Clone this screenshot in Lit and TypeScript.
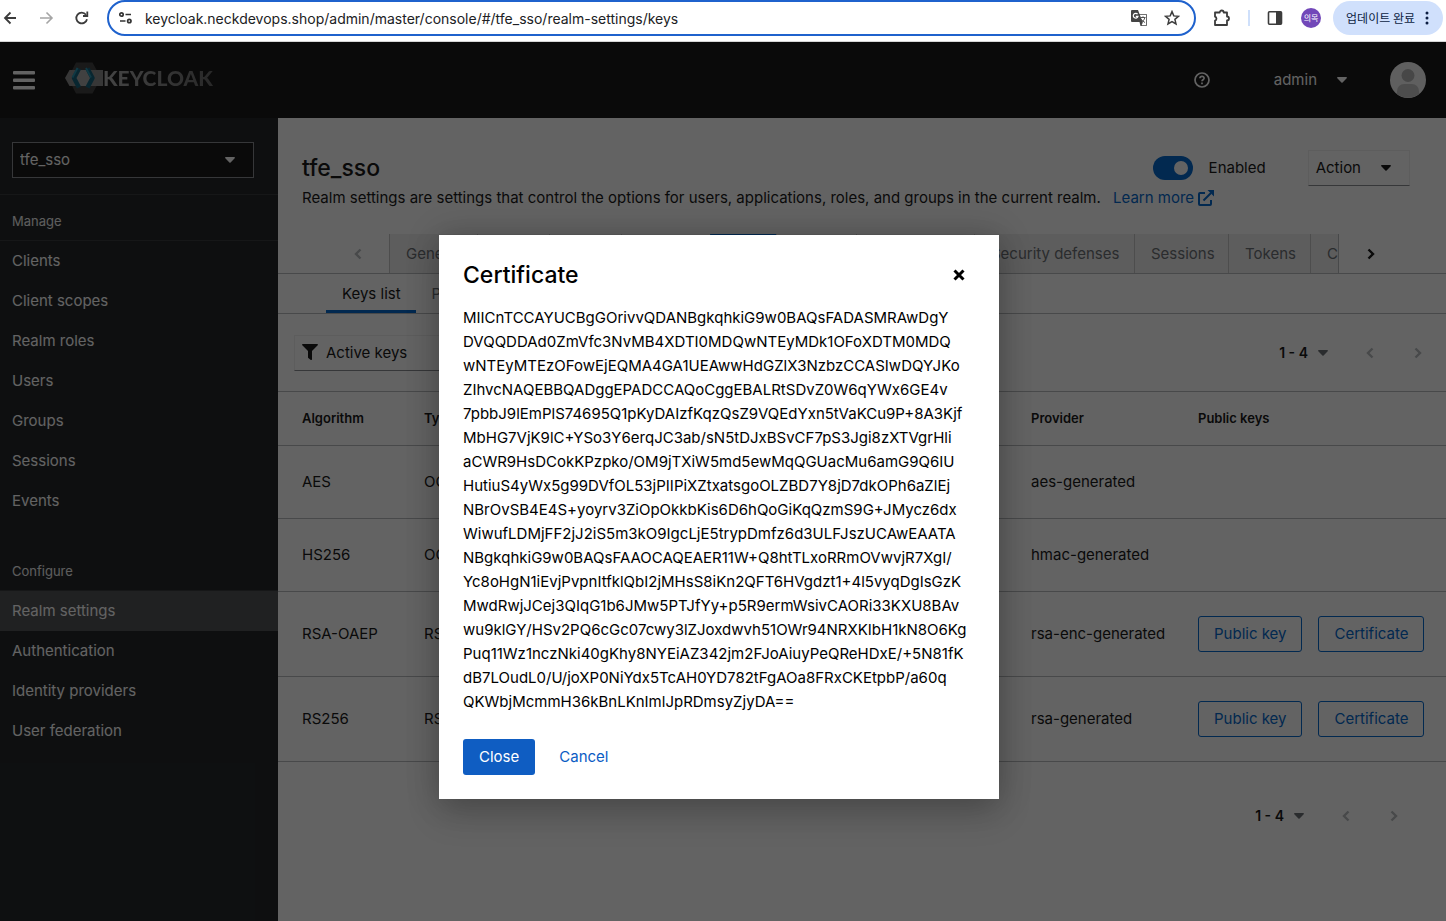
import { LitElement, html, css, svg } from "lit";
import { customElement } from "lit/decorators.js";
import { classMap } from "lit/directives/class-map.js";

const manageItems = ["Clients", "Client scopes", "Realm roles", "Users", "Groups", "Sessions", "Events"];
const configureItems = ["Realm settings", "Authentication", "Identity providers", "User federation"];
const tabs = ["General", "Login", "Email", "Themes", "Keys", "Events", "Localization", "Security defenses", "Sessions", "Tokens", "Client policies"];

const keys = [
  { algorithm: "AES", type: "OCT", provider: "aes-generated", pub: false },
  { algorithm: "HS256", type: "OCT", provider: "hmac-generated", pub: false },
  { algorithm: "RSA-OAEP", type: "RSA", provider: "rsa-enc-generated", pub: true },
  { algorithm: "RS256", type: "RSA", provider: "rsa-generated", pub: true },
];

const certificate = [
  "MIICnTCCAYUCBgGOrivvQDANBgkqhkiG9w0BAQsFADASMRAwDgY",
  "DVQQDDAd0ZmVfc3NvMB4XDTI0MDQwNTEyMDk1OFoXDTM0MDQ",
  "wNTEyMTEzOFowEjEQMA4GA1UEAwwHdGZlX3NzbzCCASIwDQYJKo",
  "ZIhvcNAQEBBQADggEPADCCAQoCggEBALRtSDvZ0W6qYWx6GE4v",
  "7pbbJ9lEmPlS74695Q1pKyDAIzfKqzQsZ9VQEdYxn5tVaKCu9P+8A3Kjf",
  "MbHG7VjK9lC+YSo3Y6erqJC3ab/sN5tDJxBSvCF7pS3Jgi8zXTVgrHli",
  "aCWR9HsDCokKPzpko/OM9jTXiW5md5ewMqQGUacMu6amG9Q6IU",
  "HutiuS4yWx5g99DVfOL53jPIIPiXZtxatsgoOLZBD7Y8jD7dkOPh6aZlEj",
  "NBrOvSB4E4S+yoyrv3ZiOpOkkbKis6D6hQoGiKqQzmS9G+JMycz6dx",
  "WiwufLDMjFF2jJ2iS5m3kO9IgcLjE5trypDmfz6d3ULFJszUCAwEAATA",
  "NBgkqhkiG9w0BAQsFAAOCAQEAER11W+Q8htTLxoRRmOVwvjR7XgI/",
  "Yc8oHgN1iEvjPvpnItfklQbI2jMHsS8iKn2QFT6HVgdzt1+4l5vyqDgIsGzK",
  "MwdRwjJCej3QIqG1b6JMw5PTJfYy+p5R9ermWsivCAORi33KXU8BAv",
  "wu9klGY/HSv2PQ6cGc07cwy3lZJoxdwvh51OWr94NRXKIbH1kN8O6Kg",
  "Puq11Wz1nczNki40gKhy8NYEiAZ342jm2FJoAiuyPeQReHDxE/+5N81fK",
  "dB7LOudL0/U/joXP0NiYdx5TcAH0YD782tFgAOa8FRxCKEtpbP/a60q",
  "QKWbjMcmmH36kBnLKnImlJpRDmsyZjyDA==",
];

const caret = svg`<svg class="caret" width="10" height="6" viewBox="0 0 10 6" aria-hidden="true"><path d="M.8 0h8.4c.7 0 1 .8.5 1.3L5.6 5.6a.9.9 0 0 1-1.2 0L.3 1.3C-.2.8.1 0 .8 0z" fill="currentColor"/></svg>`;
const chevron = (left: boolean) => html`<svg width="10" height="12" viewBox="0 0 10 12" aria-hidden="true">
  <path d=${left ? "M7.5 1.5 3 6l4.5 4.5" : "M2.5 1.5 7 6l-4.5 4.5"} fill="none" stroke="currentColor" stroke-width="2.4"/></svg>`;

const base = css`
  :host, * { box-sizing: border-box; }
  button, input, select { font: inherit; color: inherit; background: none; border: 0; margin: 0; padding: 0; }
  button, select { cursor: pointer; }
  svg { display: block; flex: none; }
`;

@customElement("browser-bar")
class BrowserBar extends LitElement {
  static styles = [base, css`
    :host { display: flex; align-items: center; height: 42px; padding: 0 3px 5px 2px; background: #fff; border-bottom: 1px solid #d5d5d5; color: #3c3c3c; font: 14px/20px Inter, sans-serif; }
    .nav { display: flex; gap: 20px; margin-right: 17px; }
    .off { color: #a5a5a5; }
    .address { flex: 1; display: flex; align-items: center; gap: 8px; height: 36px; border: 2px solid #1f62cd; border-radius: 18px; padding: 0 14px 0 8px; }
    .url { flex: 1; min-width: 0; height: 24px; color: #202124; outline: 0; }
    .star { margin-left: 8px; }
    .tools { display: flex; align-items: center; margin-left: 16px; }
    .rule { width: 2px; height: 16px; background: #cfe0fb; margin: 0 17px 0 16px; }
    .me { display: grid; place-items: center; width: 20px; height: 20px; margin: 0 12px 0 18px; border-radius: 50%; background: #7248b9; color: #fff; font: 8px/20px "Noto Sans CJK KR", sans-serif; }
    .update { display: flex; align-items: center; gap: 10px; height: 34px; padding: 0 14px 0 13px; border-radius: 17px; background: #d0e0fc; color: #0c1d42; font: 12px/20px "Noto Sans CJK KR", sans-serif; white-space: nowrap; }
  `];
  render() {
    return html`
      <div class="nav">
        <button aria-label="Back"><svg width="16" height="16" viewBox="0 0 16 16" fill="none" stroke="currentColor" stroke-width="1.8"><path d="M14 8H3.5M8.500 2.500 3 8l5.500 5.500"/></svg></button>
        <button class="off" aria-label="Forward"><svg width="16" height="16" viewBox="0 0 16 16" fill="none" stroke="currentColor" stroke-width="1.600"><path d="M2 8h11.500M8.500 2.500 14 8l-5.500 5.500"/></svg></button>
        <button aria-label="Reload"><svg width="16" height="16" viewBox="0 0 16 16" fill="none" stroke="currentColor" stroke-width="1.800"><path d="M13 9.200A5.400 5.400 0 1 1 12 4.700"/><path d="M13.300 1.500V6H9" /></svg></button>
      </div>
      <div class="address">
        <svg width="20" height="16" viewBox="0 0 20 16" fill="none" stroke="#333" stroke-width="1.700"><circle cx="4.500" cy="4.500" r="1.700"/><path d="M8.500 4.500h5.500M3 11h5.500"/><circle cx="12.300" cy="11" r="1.700"/></svg>
        <input class="url" aria-label="Address" value="keycloak.neckdevops.shop/admin/master/console/#/tfe_sso/realm-settings/keys" />
        <button aria-label="Translate"><svg width="18" height="18" viewBox="0 0 18 18"><path d="M2 1h6l1.500 4H16a1 1 0 0 1 1 1v10a1 1 0 0 1-1 1h-5.500L9.500 13H2a1 1 0 0 1-1-1V2a1 1 0 0 1 1-1z" fill="#444"/><path d="M9.800 5.800h6.400v10.400h-4.600l1.200-2.600z" fill="#fff"/><path d="M7.600 5.200A2.400 2.400 0 1 0 8 7.400H5.800" fill="none" stroke="#fff" stroke-width="1.200"/><path d="M10.500 8.500h5M13 7.300v1.200M11 10c1 1.500 2.200 2.800 4 3.500M14.800 8.700c-.4 2-1.800 3.500-3 4.300" fill="none" stroke="#555"/></svg></button>
        <button class="star" aria-label="Bookmark"><svg width="16" height="16" viewBox="0 0 16 16" fill="none" stroke="currentColor" stroke-width="1.500"><path d="m8 1.600 1.800 4.300 4.700.4-3.600 3 1.100 4.600L8 11.500l-4 2.400 1.100-4.600-3.600-3 4.700-.4z"/></svg></button>
      </div>
      <div class="tools">
        <button aria-label="Extensions"><svg width="20" height="18" viewBox="0 0 20 18" fill="none" stroke="currentColor" stroke-width="1.800" stroke-linejoin="round"><path d="M3 3.500h4.700a2 2 0 0 1 4 0H15v4a2 2 0 0 1 0 4v4.500H3v-4.300a2.100 2.100 0 0 0 0-4z"/></svg></button>
        <span class="rule"></span>
        <button aria-label="Side panel"><svg width="16" height="16" viewBox="0 0 16 16"><rect x="1.500" y="1.800" width="13" height="12.400" rx="1" fill="none" stroke="#3c3c3c" stroke-width="1.600"/><path d="M9 1.800h5.500v12.400H9z" fill="#3c3c3c"/></svg></button>
        <span class="me">의목</span>
        <button class="update">업데이트 완료 <svg width="4" height="14" viewBox="0 0 4 14" fill="#0c1d42"><circle cx="2" cy="2" r="1.500"/><circle cx="2" cy="7" r="1.500"/><circle cx="2" cy="12" r="1.500"/></svg></button>
      </div>`;
  }
}

@customElement("console-header")
class ConsoleHeader extends LitElement {
  static styles = [base, css`
    :host { display: flex; align-items: center; height: 76px; padding: 0 20px 0 13px; background: #151515; color: #fff; }
    .menu { margin-right: 30px; }
    .brand { display: flex; align-items: center; flex: 1; height: 34px; margin-bottom: 4px; }
    .word { font: 900 21px/34px Lato, sans-serif; background: linear-gradient(90deg, #b0b0b0, #666); -webkit-background-clip: text; background-clip: text; color: transparent; }
    .user { display: flex; align-items: center; gap: 20px; margin: 0 43px 0 64px; }
  `];
  render() {
    return html`
      <button class="menu" aria-label="Global navigation"><svg width="22" height="20" viewBox="0 0 22 20" fill="#fff"><rect y="1" width="22" height="3.500" rx="1"/><rect y="8.500" width="22" height="3.500" rx="1"/><rect y="16" width="22" height="3.500" rx="1"/></svg></button>
      <div class="brand">
        <svg width="38" height="34" viewBox="0 0 38 34"><path d="M11 1.500h16.500L36 17l-8.500 15.500H11L3 17z" fill="#404040"/><path d="M4.500 9H38v16H4.500L0 17z" fill="#8c8c8c"/><path d="M14 9h9l4.500 8-4.500 8h-9l-4-8z" fill="#a6a6a6"/><path d="m14 7.500-5 9.500 5 9.500" fill="none" stroke="#12607a" stroke-width="4.500" stroke-linejoin="round"/><path d="m22.500 7.500 5 9.500-5 9.500" fill="none" stroke="#12607a" stroke-width="4.500" stroke-linejoin="round"/><path d="m12.500 7-5 9.500M21 7l5 9.500" stroke="#2592ae" stroke-width="1.800"/></svg>
        <span class="word">KEYCLOAK</span>
      </div>
      <button aria-label="Help"><svg width="16" height="16" viewBox="0 0 16 16" fill="none" stroke="#fff" stroke-width="1.700"><circle cx="8" cy="8" r="7"/><path d="M5.900 6.300c.2-2.700 4.300-2.500 4.200 0-.1 1.500-2.100 1.500-2.100 3M8 10.500v1.700" /></svg></button>
      <button class="user">admin ${caret}</button>
      <svg width="36" height="36" viewBox="0 0 36 36"><circle cx="18" cy="18" r="18" fill="#f5f5f5"/><circle cx="18" cy="13.500" r="6.500" fill="#b5b5b5"/><path d="M7 32v-3a7 7 0 0 1 7-7h8a7 7 0 0 1 7 7v3a18 18 0 0 1-22 0z" fill="#c6c6c6"/></svg>`;
  }
}

@customElement("console-nav")
class ConsoleNav extends LitElement {
  static styles = [base, css`
    :host { display: block; background: #212427; color: #fff; }
    .realm { position: relative; padding: 24px 24px 16px 12px; border-bottom: 1px solid #35383b; }
    .realm select { display: block; width: 100%; height: 36px; padding: 0 7px; appearance: none; background: #151515; border: 1px solid #8a8d90; }
    .realm .caret { position: absolute; right: 43px; top: 39px; }
    h2 { margin: 0; height: 46px; padding: 16px 12px 0; font-size: 13px; line-height: 20px; font-weight: 400; color: #f0f0f0; border-bottom: 1px solid #35383b; }
    ul { margin: 0 0 24px; padding: 0; list-style: none; }
    a { display: block; padding: 8px 12px; line-height: 24px; color: inherit; text-decoration: none; }
    .current { background: #4f5255; }
  `];
  private group(title: string, items: string[]) {
    return html`<section><h2>${title}</h2><ul>${items.map((i) => html`<li><a href="#${i}" class=${classMap({ current: i === "Realm settings" })}>${i}</a></li>`)}</ul></section>`;
  }
  render() {
    return html`
      <div class="realm"><select aria-label="Realm"><option>tfe_sso</option></select>${caret}</div>
      <nav>${this.group("Manage", manageItems)}${this.group("Configure", configureItems)}</nav>`;
  }
}

@customElement("realm-keys")
class RealmKeys extends LitElement {
  static styles = [base, css`
    :host { display: block; min-width: 0; background: #fff; color: #151515; }
    .head { padding: 32px 36px 24px 24px; }
    .row { display: flex; align-items: center; height: 36px; }
    h1 { flex: 1; margin: 0; font-size: 23px; line-height: 32px; font-weight: 500; }
    .switch { display: flex; align-items: center; gap: 16px; margin-right: 42px; }
    .switch input { appearance: none; display: grid; width: 40px; height: 24px; padding: 5px; border-radius: 12px; background: #06c; justify-items: end; }
    .switch input::before { content: ""; width: 14px; height: 14px; border-radius: 50%; background: #fff; }
    .action { display: flex; align-items: center; gap: 20px; height: 36px; padding: 0 18px 0 7px; border: 1px solid #f0f0f0; border-bottom-color: #8a8d90; }
    p { margin: 0; line-height: 24px; }
    .more { display: inline-flex; align-items: center; gap: 4px; margin-left: 8px; color: #06c; text-decoration: none; }
    .tabs { display: flex; height: 40px; padding: 0 44px 0 48px; border-bottom: 1px solid #b8bbbe; }
    .scroll { display: grid; place-items: center; width: 63px; flex: none; }
    .scroll.off, .pages button:disabled { color: #b8bbbe; }
    .strip { flex: 1; min-width: 0; overflow: hidden; display: grid; grid-template-columns: 88px 72px 72px 89px 66px 80px 118px 160px 94px 82px 140px; border-right: 1px solid #b8bbbe; }
    .tab { padding: 0 0 0 16px; text-align: left; white-space: nowrap; background: #f0f0f0; color: #6a6e73; border-left: 1px solid #c6c6c6; }
    .tab.current { background: #fff; border-top: 3px solid #06c; color: #151515; }
    .sub { display: flex; height: 40px; padding: 0 48px; border-bottom: 1px solid #b8bbbe; }
    .sub button { padding: 3px 15px 0 16px; border-bottom: 3px solid transparent; color: #6a6e73; }
    .sub .current { border-color: #06c; color: #151515; }
    .bar { display: flex; align-items: center; justify-content: space-between; height: 77px; padding: 0 18px 0 16px; }
    .filter { position: relative; width: 240px; }
    .filter select { display: block; width: 100%; height: 36px; padding: 0 31px; appearance: none; border: 1px solid #f0f0f0; border-bottom-color: #8a8d90; }
    .filter svg { position: absolute; left: 8px; top: 9px; }
    .pages { display: flex; align-items: center; }
    .count { display: flex; align-items: center; gap: 10px; font-size: 14px; font-weight: 600; margin-right: 32px; }
    .count .caret { color: #6a6e73; }
    .pages .step { display: grid; place-items: center; width: 20px; height: 24px; }
    .pages .step + .step { margin-left: 28px; }
    .foot { display: flex; justify-content: flex-end; padding: 42px 42px 24px; }
    table { width: 100%; border-collapse: collapse; table-layout: fixed; border-top: 1px solid #b8bbbe; }
    th, td { padding: 24px 0 24px 16px; text-align: left; line-height: 24px; border-bottom: 1px solid #b8bbbe; font-weight: 400; white-space: nowrap; }
    th:first-child, td:first-child { padding-left: 24px; }
    thead th { padding-top: 14px; padding-bottom: 15px; font-size: 13px; font-weight: 600; }
    .c1 { width: 130px; } .c2 { width: 128px; } .c5 { width: 167px; } .c6 { width: 264px; }
    .buttons { display: flex; gap: 16px; }
    .buttons button { height: 36px; padding: 0 15px; border: 1px solid #06c; border-radius: 3px; color: #06c; }
  `];
  private pages() {
    return html`<div class="pages"><button class="count">1 - 4 ${caret}</button>
      <button class="step" disabled aria-label="Previous page">${chevron(true)}</button><button class="step" disabled aria-label="Next page">${chevron(false)}</button></div>`;
  }
  render() {
    return html`
      <div class="head">
        <div class="row">
          <h1>tfe_sso</h1>
          <label class="switch"><input type="checkbox" checked />Enabled</label>
          <button class="action">Action ${caret}</button>
        </div>
        <p>Realm settings are settings that control the options for users, applications, roles, and groups in the current realm.
          <a class="more" href="#learn">Learn more <svg width="16" height="16" viewBox="0 0 16 16" fill="none" stroke="currentColor" stroke-width="2"><path d="M7 3H2a1 1 0 0 0-1 1v10a1 1 0 0 0 1 1h10a1 1 0 0 0 1-1V10"/><path d="M5.500 10.500 13 3"/><path d="M9.500 0H16v6.500z" fill="currentColor" stroke="none"/></svg></a></p>
      </div>
      <div class="tabs">
        <button class="scroll off" disabled aria-label="Scroll left">${chevron(true)}</button>
        <div class="strip">${tabs.map((t) => html`<button class=${classMap({ tab: true, current: t === "Keys" })}>${t}</button>`)}</div>
        <button class="scroll" aria-label="Scroll right">${chevron(false)}</button>
      </div>
      <div class="sub"><button class="current">Keys list</button><button>Providers</button></div>
      <div class="bar">
        <div class="filter"><select aria-label="Filter keys"><option>Active keys</option></select>
          <svg width="16" height="16" viewBox="0 0 16 16"><path d="M.8 0h14.400c.7 0 1 .8.500 1.300L10 7v8.300c0 .6-.7.900-1.200.6L6.300 14a.8.8 0 0 1-.3-.6V7L.3 1.300C-.2.8.1 0 .8 0z" fill="#151515"/></svg></div>
        ${this.pages()}
      </div>
      <table>
        <colgroup><col class="c1" /><col class="c2" /><col /><col class="c5" /><col class="c6" /></colgroup>
        <thead><tr>${["Algorithm", "Type", "", "Provider", "Public keys"].map((h) => html`<th scope="col">${h}</th>`)}</tr></thead>
        <tbody>${keys.map((k) => html`<tr>
          <td>${k.algorithm}</td><td>${k.type}</td><td></td><td>${k.provider}</td>
          <td>${k.pub ? html`<div class="buttons"><button>Public key</button><button>Certificate</button></div>` : ""}</td></tr>`)}</tbody>
      </table>
      <div class="foot">${this.pages()}</div>`;
  }
}

@customElement("certificate-dialog")
class CertificateDialog extends LitElement {
  static styles = [base, css`
    :host { position: absolute; inset: 0; display: flex; align-items: flex-start; justify-content: center; padding: 193px 8px 0 0; background: rgba(3, 3, 3, 0.62); color: #151515; }
    .box { width: 560px; max-width: 100%; padding: 24px; background: #fff; box-shadow: 0 16px 32px rgba(3, 3, 3, 0.16), 0 0 32px rgba(3, 3, 3, 0.2); }
    header { display: flex; align-items: center; justify-content: space-between; height: 32px; margin-bottom: 15px; }
    h2 { margin: 0; font-size: 23px; line-height: 32px; font-weight: 500; color: #000; }
    .x { display: grid; place-items: center; width: 32px; height: 32px; }
    .text { line-height: 24px; white-space: pre; color: #000; }
    footer { display: flex; gap: 8px; margin-top: 25px; }
    footer button { height: 36px; padding: 0 16px; border-radius: 3px; color: #0b5cc4; }
    footer .primary { background: #0f5dc2; color: #fff; }
  `];
  render() {
    return html`<div class="box" role="dialog" aria-label="Certificate">
      <header><h2>Certificate</h2><button class="x" aria-label="Close dialog"><svg width="12" height="12" viewBox="0 0 12 12"><path d="m1.500 1.500 9 9m0-9-9 9" stroke="#000" stroke-width="3"/></svg></button></header>
      <div class="text">${certificate.join("\n")}</div>
      <footer><button class="primary">Close</button><button>Cancel</button></footer>
    </div>`;
  }
}

@customElement("app-root")
class AppRoot extends LitElement {
  static styles = css`
    :host { display: flex; flex-direction: column; min-height: 100vh; font: 15px/24px Inter, sans-serif; }
    .console { position: relative; flex: 1; display: flex; flex-direction: column; }
    .body { flex: 1; display: grid; grid-template-columns: 278px minmax(0, 1fr); }
  `;
  render() {
    return html`<browser-bar></browser-bar>
      <div class="console">
        <console-header></console-header>
        <div class="body"><console-nav></console-nav><realm-keys></realm-keys></div>
        <certificate-dialog></certificate-dialog>
      </div>`;
  }
}
